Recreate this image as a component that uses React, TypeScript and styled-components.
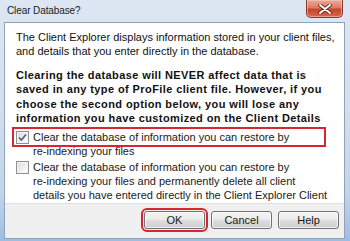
import React from 'react';
import styled, { createGlobalStyle } from 'styled-components';

const GlobalStyle = createGlobalStyle`
  html, body {
    margin: 0;
    padding: 0;
    background: #ffffff;
  }
`;

const App = () => {
  return (
    <>
      <GlobalStyle />
      <Window>
        <TitleBar>
          <TitleText>Clear Database?</TitleText>
          <CloseButton aria-label='Close'>
            <svg width='14' height='10' viewBox='0 0 14 10'>
              <path d='M2 1 L12 9 M12 1 L2 9' stroke='#5a2218' strokeWidth='3.6' strokeLinecap='round' />
              <path d='M2 1 L12 9 M12 1 L2 9' stroke='#ffffff' strokeWidth='2' strokeLinecap='round' />
            </svg>
          </CloseButton>
        </TitleBar>
        <Client>
          <Content>
            <Paragraph>
              The Client Explorer displays information stored in your client files,
              <br />
              and details that you enter directly in the database.
            </Paragraph>
            <BoldParagraph>
              Clearing the database will NEVER affect data that is
              <br />
              saved in any type of ProFile client file. However, if you
              <br />
              choose the second option below, you will lose any
              <br />
              information you have customized on the Client Details
            </BoldParagraph>
            <CheckRow>
              <CheckBox>
                <svg width='9' height='9' viewBox='0 0 9 9'>
                  <path d='M1 4.6 L3.4 7 L8 1.6' fill='none' stroke='#4a5e94' strokeWidth='1.6' />
                </svg>
              </CheckBox>
              <CheckLabel>
                Clear the database of information you can restore by
                <br />
                re-indexing your files
              </CheckLabel>
              <Highlight />
            </CheckRow>
            <CheckRow>
              <CheckBox />
              <CheckLabel>
                Clear the database of information you can restore by
                <br />
                re-indexing your files and permanently delete all client
                <br />
                details you have entered directly in the Client Explorer Client
                <br />
                Details window.
              </CheckLabel>
            </CheckRow>
          </Content>
          <Footer>
            <DialogButton $marked>OK</DialogButton>
            <DialogButton>Cancel</DialogButton>
            <DialogButton>Help</DialogButton>
          </Footer>
        </Client>
      </Window>
    </>
  );
};

const Window = styled.div`
  width: 350px;
  height: 241px;
  box-sizing: border-box;
  display: flex;
  flex-direction: column;
  overflow: hidden;
  background: linear-gradient(180deg, #dde7f3 0%, #d2dfee 45%, #c2d5ea 80%, #9cbde2 100%);
  font-family: 'Liberation Sans', Arial, sans-serif;
  color: #111111;
`;

const TitleBar = styled.div`
  height: 22px;
  flex: none;
  display: flex;
  align-items: flex-start;
  justify-content: space-between;
  padding: 0 7px 0 7px;
`;

const TitleText = styled.div`
  font-size: 10px;
  letter-spacing: -0.1px;
  line-height: 22px;
  color: #1b1b1b;
`;

const CloseButton = styled.div`
  width: 37px;
  height: 18px;
  box-sizing: border-box;
  display: flex;
  align-items: center;
  justify-content: center;
  border: 1px solid #8a3b2c;
  border-top: none;
  border-radius: 0 0 5px 5px;
  background: linear-gradient(180deg, #e9ab9c 0%, #dc7a64 45%, #c7432b 55%, #d4694f 100%);
  box-shadow: inset 0 0 0 1px rgba(255, 210, 200, 0.5);
`;

const Client = styled.div`
  flex: 1;
  display: flex;
  flex-direction: column;
  margin: 0 5px 2px 4px;
  border: 1px solid #8fa3bc;
  background: #ffffff;
  min-height: 0;
`;

const Content = styled.div`
  height: 180px;
  flex: none;
  box-sizing: border-box;
  overflow: hidden;
  padding: 7px 6px 0 11px;
  font-size: 11px;
  line-height: 14px;
  white-space: nowrap;
`;

const Paragraph = styled.p`
  margin: 0 0 10px;
`;

const BoldParagraph = styled.p`
  margin: 0 0 4px;
  font-weight: bold;
  letter-spacing: 0.4px;
  line-height: 14.4px;
`;

const CheckRow = styled.div`
  position: relative;
  display: flex;
  align-items: flex-start;
  gap: 4px;
  margin-bottom: 2px;
`;

const CheckBox = styled.span`
  width: 13px;
  height: 13px;
  box-sizing: border-box;
  margin-top: 1px;
  flex: none;
  display: flex;
  align-items: center;
  justify-content: center;
  border: 1px solid #8e8f8f;
  background: linear-gradient(135deg, #d8d8d8 0%, #f2f2f2 60%, #ffffff 100%);
  box-shadow: inset 0 0 0 1px #f4f4f4;
`;

const CheckLabel = styled.span`
  color: #1a1a1a;
`;

const Highlight = styled.span`
  position: absolute;
  left: -4px;
  top: -3px;
  width: 314px;
  height: 20px;
  box-sizing: border-box;
  border: 2px solid #d52631;
  pointer-events: none;
`;

const Footer = styled.div`
  flex: 1;
  display: flex;
  justify-content: flex-end;
  align-items: flex-start;
  gap: 6px;
  padding: 7px 5px 0 0;
  background: #f0f0f0;
  border-top: 1px solid #dfdfdf;
`;

const DialogButton = styled.div<{ $marked?: boolean }>`
  width: 61px;
  height: 18px;
  box-sizing: border-box;
  display: flex;
  align-items: center;
  justify-content: center;
  font-size: 11px;
  color: #1a1a1a;
  border: 1px solid #707070;
  border-radius: 3px;
  background: linear-gradient(180deg, #f4f4f4 0%, #ebebeb 48%, #dddddd 52%, #cfcfcf 100%);
  box-shadow: inset 0 0 0 1px rgba(255, 255, 255, 0.7);
  outline: ${(p) => (p.$marked ? '2px solid #d52631' : 'none')};
  outline-offset: 1px;
`;

export default App;
